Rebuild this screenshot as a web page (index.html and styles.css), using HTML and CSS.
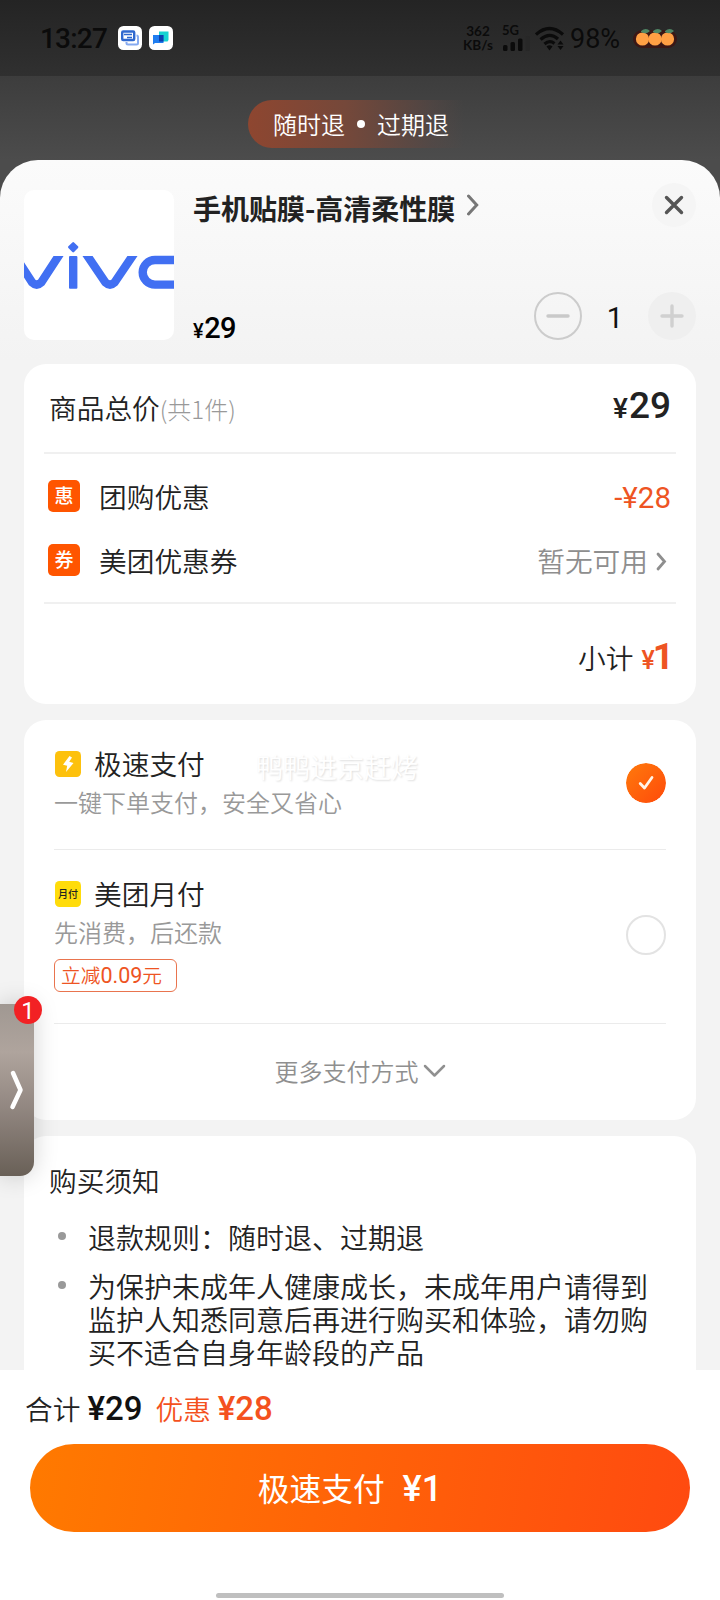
FILE: index.html
```html
<!DOCTYPE html>
<html lang="zh-CN">
<head>
<meta charset="utf-8">
<title>提交订单</title>
<link rel="stylesheet" href="styles.css">
</head>
<body>
<div class="screen">
  <header class="status">
    <div class="status-left">
      <span class="clock">13:27</span>
      <svg class="app" viewBox="0 0 24 24"><rect width="24" height="24" rx="5.5" fill="#fff"/><path d="M8.500 16v1a1.500 1.500 0 0 0 1.500 1.500h8.500a1.500 1.500 0 0 0 1.500-1.500v-6a1.500 1.500 0 0 0-1.500-1.500" fill="none" stroke="#86aaf0" stroke-width="2"/><rect x="4.200" y="5.500" width="12" height="8.500" rx="1" fill="#fff" stroke="#2f68cf" stroke-width="2.400"/><path d="M6 8.500h8M9 11.500h5" stroke="#2f68cf" stroke-width="1.500"/></svg>
      <svg class="app" viewBox="0 0 24 24"><rect width="24" height="24" rx="5.500" fill="#fff"/><path d="M10 5.500h9.500V14l-1 1.500H10z" fill="#16d2d2"/><path d="M4 9h10.500v8H6l-2 1.500z" fill="#1f7df0"/><path d="M10 9h4.500v6.500H10z" fill="#0b3fae"/></svg>
    </div>
    <div class="status-right">
      <span class="speed"><span>362</span><span>KB/s</span></span>
      <span class="cell"><span>5G</span>
        <svg width="28" height="15" viewBox="0 0 28 15"><rect x="1" y="9" width="4.500" height="6" rx="1.500" fill="#0b0b0b"/><rect x="8.500" y="6" width="4.500" height="9" rx="1.500" fill="#0b0b0b"/><rect x="16" y="2.500" width="4.500" height="12.500" rx="1.500" fill="#0b0b0b"/><rect x="23.500" y="0" width="4.500" height="15" rx="1.500" fill="#282828"/></svg>
      </span>
      <svg class="wifi" width="30" height="25" viewBox="0 0 30 25"><g fill="none" stroke="#0b0b0b" stroke-width="3.200"><path d="M1 8.500Q14.500-3.500 28 8.500"/><path d="M5.500 13.500Q14.500 5.500 23 13"/><path d="M9.500 18Q14.500 13.500 19.500 17.500"/></g><path d="M11.500 20.500Q14.500 18 17.500 20.500L14.500 24.500zM22.500 18.500l3-4 3 4zM22.500 20l3 4 3-4z" fill="#0b0b0b"/></svg>
      <span class="battery">98%</span>
      <svg class="oranges" width="44" height="22" viewBox="0 0 44 22"><rect x="0" y="3" width="44" height="18" rx="9" fill="#3a1715"/><g fill="#ffa044"><circle cx="9.500" cy="12" r="6.600"/><circle cx="22" cy="12" r="6.600"/><circle cx="34.500" cy="12" r="6.600"/></g><g fill="#4f8665"><path d="M8 4q5-4 9 0-4 4-9 1zM20 4q5-4 9 0-4 4-9 1zM32 4q5-4 9 0-4 4-9 1z"/></g></svg>
    </div>
  </header>

  <div class="backdrop">
    <div class="promise"><span>随时退</span><i class="promise-dot"></i><span>过期退</span></div>
  </div>

  <main class="sheet">
    <section class="product">
      <svg class="thumb" viewBox="0 0 150 150"><rect width="150" height="150" fill="#fff"/>
        <g fill="none" stroke="#416ff2" stroke-width="8.400"><path d="M-11 63L8.200 92.500Q12.700 96.800 17.200 92.500L36.500 63" clip-path="url(#cap)"/><path d="M61.500 63L81.500 92.500Q86 96.800 90.500 92.500L110.500 63" clip-path="url(#cap)"/><path d="M155 70H131a12.300 12.300 0 0 0 0 24.600h24"/></g>
        <clipPath id="cap"><rect x="-20" y="66" width="190" height="40"/></clipPath>
        <rect x="45" y="66" width="8.400" height="32.700" rx="1" fill="#416ff2"/><rect x="45.200" y="53.200" width="8" height="8" rx="1.200" transform="rotate(45 49.200 57.200)" fill="#416ff2"/>
      </svg>
      <div class="product-info">
        <div class="product-title">手机贴膜-高清柔性膜
          <svg width="12" height="22" viewBox="0 0 12 22"><path d="M1.500 2l8.200 9-8.200 9" fill="none" stroke="#777" stroke-width="3" stroke-linecap="round"/></svg>
        </div>
        <div class="product-price num"><small>¥</small>29</div>
      </div>
      <div class="product-side">
        <button class="close" aria-label="关闭"><svg width="20" height="20" viewBox="0 0 20 20"><path d="M2.500 2.500l15 15M17.500 2.500l-15 15" stroke="#555" stroke-width="3.400" stroke-linecap="round"/></svg></button>
        <div class="stepper">
          <button class="step minus" aria-label="减少"><svg width="24" height="24" viewBox="0 0 24 24"><path d="M2 12h20" stroke="#c9c9c9" stroke-width="3.400" stroke-linecap="round"/></svg></button>
          <span class="qty num">1</span>
          <button class="step plus" aria-label="增加"><svg width="24" height="24" viewBox="0 0 24 24"><path d="M2 12h20M12 2v20" stroke="#d0d0d0" stroke-width="3.400" stroke-linecap="round"/></svg></button>
        </div>
      </div>
    </section>

    <section class="card bill">
      <div class="bill-total"><span>商品总价<em>(共1件)</em></span><b class="num total-num"><small>¥</small>29</b></div>
      <div class="bill-offers">
        <div class="offer"><i class="offer-tag">惠</i><span class="offer-name">团购优惠</span><span class="offer-value num">-¥28</span></div>
        <div class="offer"><i class="offer-tag">券</i><span class="offer-name">美团优惠券</span><span class="offer-none"><span class="offer-name">暂无可用</span><svg width="11" height="19" viewBox="0 0 11 19"><path d="M2 2l6.500 7.500L2 17" fill="none" stroke="#8e8e8e" stroke-width="2.800" stroke-linecap="round"/></svg></span></div>
      </div>
      <div class="subtotal"><span>小计</span><b class="num"><small>¥</small>1</b></div>
    </section>

    <section class="card pay">
      <div class="method method-fast">
        <div class="method-text">
          <div class="method-name"><svg width="26" height="26" viewBox="0 0 26 26"><rect width="26" height="26" rx="4.500" fill="#fdc10d"/><path d="M14.500 5L8 13.700l4.200 1L11 21l7.500-9-4.300-1.200L17 6.500z" fill="#fff"/></svg><span>极速支付</span></div>
          <div class="method-desc">一键下单支付，安全又省心</div>
        </div>
        <svg class="radio" width="40" height="40" viewBox="0 0 40 40"><defs><linearGradient id="rg" x1="0" y1="0" x2="1" y2="1"><stop offset="0" stop-color="#ff7a0c"/><stop offset="1" stop-color="#ff4a0a"/></linearGradient></defs><circle cx="20" cy="20" r="20" fill="url(#rg)"/><path d="M14.200 20.500l4.300 4.500 7.500-10.500" fill="none" stroke="#fff4e8" stroke-width="2.800" stroke-linecap="round" stroke-linejoin="round"/></svg>
        <span class="watermark">鸭鸭进京赶烤</span>
      </div>
      <div class="method method-monthly">
        <div class="method-text">
          <div class="method-name"><i class="monthly-icon">月付</i><span>美团月付</span></div>
          <div class="method-desc">先消费，后还款</div>
          <div class="discount">立减<span class="num">0.09</span>元</div>
        </div>
        <i class="radio radio-off"></i>
      </div>
      <div class="more">更多支付方式<svg width="23" height="14" viewBox="0 0 23 14"><path d="M2 2l9.500 9.500L21 2" fill="none" stroke="#909090" stroke-width="2.500" stroke-linecap="round" stroke-linejoin="round"/></svg></div>
    </section>

    <section class="card notice">
      <h2>购买须知</h2>
      <ul>
        <li>退款规则：随时退、过期退</li>
        <li>为保护未成年人健康成长，未成年用户请得到<br>监护人知悉同意后再进行购买和体验，请勿购<br>买不适合自身年龄段的产品</li>
      </ul>
    </section>
  </main>

  <footer class="footer">
    <div class="sum"><span>合计</span><b class="num">¥29</b><span class="save">优惠</span><b class="num save">¥28</b></div>
    <button class="submit"><span>极速支付</span><b class="num">¥1</b></button>
    <i class="home-bar"></i>
  </footer>

  <aside class="side-tab">
    <svg width="34" height="172" viewBox="0 0 34 172"><path d="M13 69l7.500 17-8 17" fill="none" stroke="#fff" stroke-width="4.500" stroke-linecap="round" stroke-linejoin="round"/></svg>
    <span class="side-badge num">1</span>
  </aside>
</div>
</body>
</html>
```
FILE: styles.css
```css
* { box-sizing: border-box; }
body { margin: 0; background: #fff; }
i, em { font-style: normal; }
button { border: 0; padding: 0; font: inherit; display: flex; align-items: center; justify-content: center; }
svg { display: block; flex: none; }

.screen {
  position: relative;
  width: 720px;
  height: 1600px;
  overflow: hidden;
  display: flex;
  flex-direction: column;
  background: #4c4c4c;
  color: #222;
  font: 350 27.7px/40px "Noto Sans CJK SC", sans-serif;
}
.num { font-family: Roboto, "Noto Sans CJK SC", sans-serif; font-weight: 400; }

/* status bar */
.status {
  flex: none;
  height: 76px;
  padding: 0 43px 0 40px;
  display: flex;
  align-items: center;
  justify-content: space-between;
  background: linear-gradient(#242424, #303030);
  color: #0b0b0b;
  font-family: Lato, sans-serif;
}
.status-left, .status-right { display: flex; align-items: center; }
.clock { width: 78px; padding-top: 2px; font-family: Roboto, sans-serif; font-size: 28px; font-weight: 500; letter-spacing: -.8px; }
.app { width: 24px; height: 24px; margin-right: 7px; }
.speed { display: flex; flex-direction: column; align-items: center; width: 30px; margin-right: 3px; font-size: 13.500px; line-height: 14px; font-weight: 700; }
.cell { display: flex; flex-direction: column; margin-left: 6px; width: 30px; font-size: 13px; line-height: 11px; font-weight: 700; }
.wifi { margin-left: 3px; }
.battery { margin-left: 5px; width: 58px; padding-top: 2px; font-family: Roboto, sans-serif; font-weight: 400; font-size: 27px; letter-spacing: 0; }
.oranges { margin-left: 5px; }

.backdrop {
  flex: none;
  height: 84px;
  padding: 24px 0 0 248px;
  background: linear-gradient(#3d3d3d, #4c4c4c);
}
.promise {
  width: 216px;
  height: 48px;
  padding-left: 25px;
  display: flex;
  align-items: center;
  border-radius: 24px 0 0 24px;
  background: linear-gradient(90deg, #8e4630, #75483a 45%, rgba(90, 72, 68, .5) 85%, transparent);
  color: #fff;
  font-size: 24px;
}
.promise-dot { width: 8px; height: 8px; margin: 0 12px; border-radius: 50%; background: #fff; }

/* bottom sheet */
.sheet {
  flex: none;
  height: 1210px;
  padding: 0 24px;
  overflow: hidden;
  border-radius: 38px 38px 0 0;
  background: linear-gradient(#fbfbfb, #f3f3f3 200px);
}
.product { height: 204px; padding-top: 30px; display: flex; }
.thumb { width: 150px; height: 150px; border-radius: 10px; }
.product-info { flex: 1; height: 158px; margin-top: -2px; padding-left: 19px; display: flex; flex-direction: column; justify-content: space-between; }
.product-title { display: flex; align-items: center; gap: 12px; height: 40px; font-size: 28px; font-weight: 700; white-space: nowrap; }
.product-title svg { margin-top: -7px; }
.product-price { color: #000; font-size: 29px; font-weight: 500; line-height: 30px; letter-spacing: -.5px; }
.product-price small { font-size: 20px; margin-right: 1px; }
.product-side { width: 162px; display: flex; flex-direction: column; align-items: flex-end; margin-top: -7px; }
.close { width: 44px; height: 44px; border-radius: 50%; background: #f5f5f5; }
.stepper { margin-top: 65px; width: 162px; display: flex; align-items: center; justify-content: space-between; }
.step { width: 48px; height: 48px; border-radius: 50%; background: transparent; }
.minus { border: 2px solid #ccc; }
.plus { background: #efefef; }
.qty { font-size: 29px; color: #111; padding-top: 3px; }

.card { background: #fff; border-radius: 22px; }
.bill { height: 340px; }
.bill-total { height: 90px; margin: 0 20px; padding: 0 5px; border-bottom: 2px solid #f0f0f0; display: flex; align-items: center; justify-content: space-between; }
.bill-total em { color: #999; font-weight: 300; font-size: 24px; }
.total-num { font-size: 37px; font-weight: 500; margin-top: -1px; }
.total-num small { font-size: 28px; margin-right: 1px; }
.bill-offers { height: 150px; margin: 0 20px; padding: 11px 5px 0 4px; border-bottom: 2px solid #f0f0f0; }
.offer { height: 64px; display: flex; align-items: center; }
.offer-name { margin-top: -2px; }
.offer-tag { width: 32px; height: 32px; margin: -3px 19px 0 0; border-radius: 5px; background: #ff5500; color: #fff; font-size: 19px; line-height: 30px; text-align: center; font-weight: 500; }
.offer-value { margin-left: auto; padding-top: 2px; color: #ee5423; font-size: 29.500px; }
.offer-none { margin-left: auto; display: flex; align-items: center; gap: 8px; padding-right: 4px; color: #8e8e8e; }
.subtotal { height: 100px; padding: 8px 24px 0 0; display: flex; align-items: baseline; justify-content: flex-end; gap: 8px; }
.subtotal b { font-size: 37px; line-height: 90px; color: #ee5423; font-weight: 700; letter-spacing: -2px; }
.subtotal small { font-size: 25px; font-weight: 500; }

/* payment methods */
.pay { height: 400px; margin-top: 16px; padding: 0 30px; }
.method { position: relative; display: flex; justify-content: space-between; border-bottom: 1px solid #ebebeb; }
.method-fast { height: 130px; padding-top: 24px; }
.method-monthly { height: 174px; padding-top: 24px; }
.method-text { margin-left: 1px; }
.method-name { display: flex; align-items: center; gap: 13px; height: 40px; }
.method-name span { margin-top: -2px; }
.method-desc { height: 38px; margin-left: -1px; font-size: 24px; line-height: 36px; color: #999; }
.radio { margin-top: 19px; border-radius: 50%; }
.radio-off { width: 40px; height: 40px; margin-top: 41px; border: 2px solid #e3e3e3; }
.watermark { position: absolute; left: 202px; top: 27px; font-size: 27px; color: #fff; text-shadow: 1px 1px 2px #ddd; }
.monthly-icon { width: 26px; height: 26px; border-radius: 4.500px; background: #ffdc0b; font-size: 10px; line-height: 25px; font-weight: 500; text-align: center; }
.discount { margin: 7px 0 0 -1px; width: 123px; height: 33px; padding-left: 6px; border: 1px solid #e9744e; border-radius: 6px; color: #ee5423; font-size: 19.700px; line-height: 30px; white-space: nowrap; }
.discount .num { font-size: 21.500px; }
.more { height: 96px; padding-bottom: 2px; display: flex; align-items: center; justify-content: center; gap: 4px; font-size: 24px; color: #8f8f8f; }

.notice { height: 300px; margin-top: 16px; padding: 24px 25px; }
.notice h2 { margin: 0; font-size: 27.7px; font-weight: 350; height: 40px; }
.notice ul { margin: 0; padding: 5px 0 0; list-style: none; }
.notice li { position: relative; margin-top: 16px; padding-left: 39px; font-size: 28px; line-height: 33px; white-space: nowrap; }
.notice li::before { content: ""; position: absolute; left: 9px; top: 11px; width: 8px; height: 8px; border-radius: 50%; background: #999; }

.footer { position: relative; flex: none; height: 230px; padding: 18px 30px 0; background: #fff; }
.sum { margin-left: -5px; height: 40px; display: flex; align-items: center; }
.sum b { margin: 0 13px 0 7px; padding-top: 2px; font-size: 33px; font-weight: 500; color: #111; }
.sum .save { color: #f4511e; }
.submit { width: 660px; height: 88px; margin-top: 16px; padding: 0 20px 2px 0; gap: 18px; border-radius: 44px; background: linear-gradient(100deg, #ff7a00, #ff4a10); color: #fff; font-size: 31.700px; font-weight: 400; }
.submit b { font-size: 36px; font-weight: 500; padding-top: 4px; }
.home-bar { position: absolute; left: 216px; bottom: 2px; width: 288px; height: 5px; border-radius: 3px; background: #bfbfbf; }

/* floating drawer handle */
.side-tab { position: absolute; left: 0; top: 1004px; width: 34px; height: 172px; border-radius: 0 0 14px 0; background: linear-gradient(#a09892, #afa49d 28%, #948983 58%, #696057); box-shadow: 0 0 24px rgba(0, 0, 0, .18); }
.side-badge { position: absolute; left: 14px; top: -8px; width: 28px; height: 28px; border-radius: 50%; background: #f22124; color: #fff; font-size: 24px; line-height: 31px; text-align: center; }
```
